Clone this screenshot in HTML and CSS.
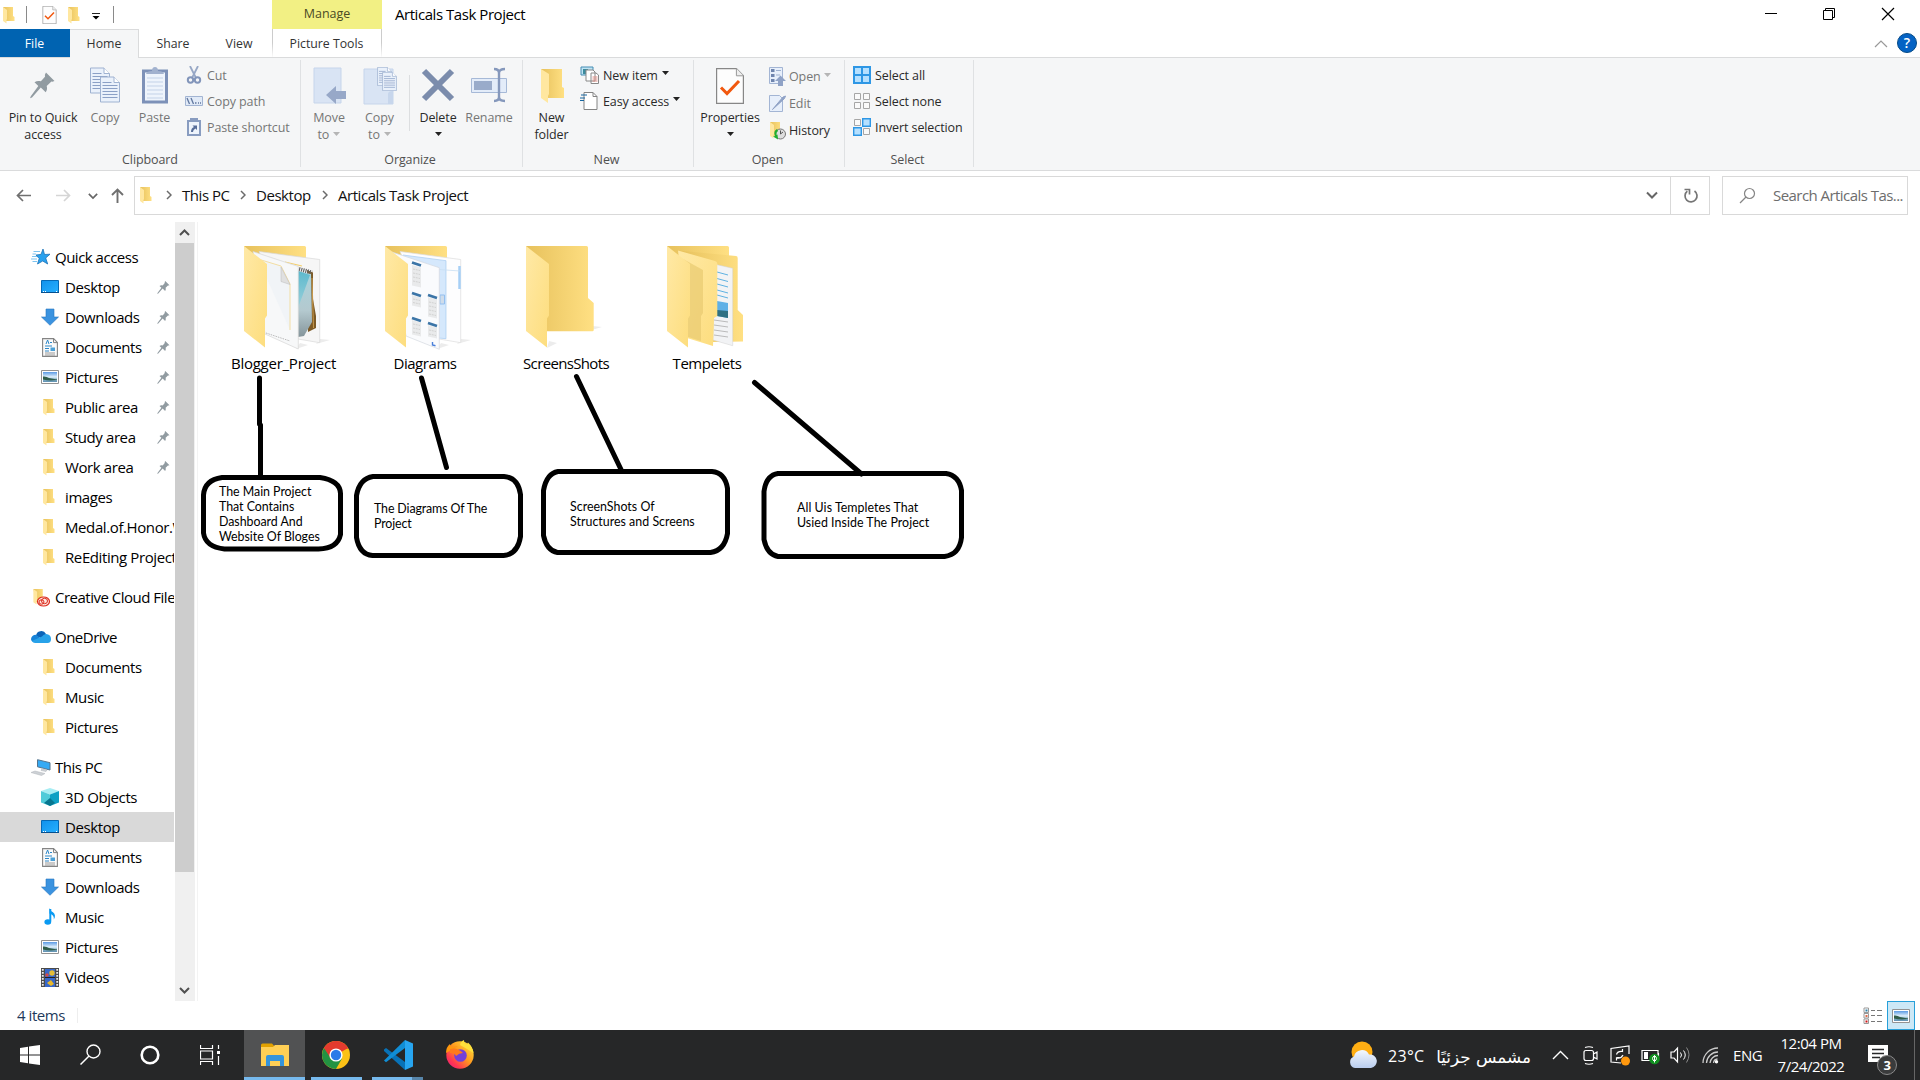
FILE: index.html
```html
<!DOCTYPE html>
<html lang="en">
<head>
<meta charset="utf-8">
<title>Articals Task Project</title>
<link rel="stylesheet" href="styles.css">
</head>
<body>
<svg class="defs" width="0" height="0">
  <defs>
    <linearGradient id="gBack" x1="0" x2="1"><stop offset="0" stop-color="#e7c15c"/><stop offset="1" stop-color="#ffe083"/></linearGradient>
    <linearGradient id="gFront" x1="0" x2="1" y1="0" y2="1"><stop offset="0" stop-color="#ffe9a6"/><stop offset="1" stop-color="#fddd7d"/></linearGradient>
    <linearGradient id="gTeal" x1="0" x2="0" y1="0" y2="1"><stop offset="0" stop-color="#5db9cd"/><stop offset="1" stop-color="#9bd0da"/></linearGradient>
    <linearGradient id="gPad" x1="0" x2="0" y1="0" y2="1"><stop offset="0" stop-color="#a9d4dd"/><stop offset=".6" stop-color="#b4c9cf"/><stop offset="1" stop-color="#85959b"/></linearGradient>
    <linearGradient id="gSky" x1="0" x2="0" y1="0" y2="1"><stop offset="0" stop-color="#5a9ae4"/><stop offset=".5" stop-color="#e2f1fb"/><stop offset=".7" stop-color="#8db7cf"/><stop offset="1" stop-color="#5d8fb0"/></linearGradient>
    <linearGradient id="gScreen" x1="0" x2="1" y1="0" y2="1"><stop offset="0" stop-color="#1091ec"/><stop offset="1" stop-color="#27b0ff"/></linearGradient>
    <linearGradient id="gFox" x1="1" x2="0" y1="0" y2="1"><stop offset="0" stop-color="#fff044"/><stop offset=".45" stop-color="#ff9a1f"/><stop offset=".75" stop-color="#ff3750"/><stop offset="1" stop-color="#e31587"/></linearGradient>
    <linearGradient id="gCloud" x1="0" x2="0" y1="0" y2="1"><stop offset="0" stop-color="#f4f8fe"/><stop offset="1" stop-color="#b9cdee"/></linearGradient>
  </defs>
  <symbol id="folder" viewBox="0 0 14 18"><path d="M1 1h10v9l1.500 1v4H4z" fill="url(#gBack)"/><path d="M1 1l4 3v9l-.5 1v3.500L1 15z" fill="#ffe7a0"/></symbol>
  <symbol id="pin" viewBox="0 0 25 26"><path d="M16 0l8.500 8.500-2.200.7-.9-.3-4.700 4.700c.7 2.600.4 4.300-1 6.200l-4.900-4.900L2 25l-2 .8.800-2.100 7.500-10.100-3.800-3.800c2-1.400 3.900-1.700 6.400-1L15 4.200l-.1-2z" fill="#919ba1"/></symbol>
  <symbol id="check" viewBox="0 0 28 36"><path d="M.6.6h19.800l7 7.200v27.600H.6z" fill="#fdfdfd" stroke="#878787" stroke-width="1.200"/><path d="M20.400.6v7.200h7" fill="#eee" stroke="#999"/><path d="M5 19.500l6 6L23 13" fill="none" stroke="#f1580f" stroke-width="3"/></symbol>
  <symbol id="page" viewBox="0 0 20 26"><path d="M.5.500h13.500l5.500 5.500v19.500H.5z" fill="#eaf1fb" stroke="#9fb2d1"/><path d="M14 .5v5.500h5.500" fill="#fff" stroke="#9fb2d1"/><path d="M2.500 6h9M2.500 9h15M2.500 12h15M2.500 15h15M2.500 18h15M2.500 21h15" stroke="#8ba0c6" fill="none"/></symbol>
  <symbol id="desktop" viewBox="0 0 18 14"><path d="M.5.500h17v12H.5z" fill="url(#gScreen)" stroke="#0669b5"/><path d="M0 12.500h18" stroke="#064f8e"/><path d="M2 11.500h1M4 11.500h1M15 11.500h1" stroke="#fff"/></symbol>
  <symbol id="download" viewBox="0 0 18 18"><path d="M5 1h8v8h4.500L9 17.300.5 9H5z" fill="#3b93e0" stroke="#2676c0" stroke-width=".6"/></symbol>
  <symbol id="document" viewBox="0 0 16 19"><path d="M.6.6h11l3.800 3.800v14H.6z" fill="#fafafa" stroke="#848484" stroke-width="1.100"/><path d="M11.500.6v4h4" fill="none" stroke="#848484"/><path d="M4 6l1.600-4L7 6M8 4.500h2M3 8h7M3 10.500h4M3 13h4" stroke="#2c87c8" fill="none"/><path d="M8.500 9.500h4.500v3.500H8.500z" fill="#4ba0d7"/><path d="M3 15h10M3 17h10" stroke="#999"/></symbol>
  <symbol id="picture" viewBox="0 0 18 14"><path d="M.5.500h17v13H.5z" fill="#fff" stroke="#929292"/><path d="M2 2h14v10H2z" fill="url(#gSky)"/><path d="M2 6.500q3-.5 6 1.500l8 1.500v.5q-8 1-14-.5z" fill="#315e4b"/></symbol>
  <symbol id="star" viewBox="0 0 20 18"><path d="M12 1l1.500 5.500 5.500-.3-4.300 3.800 2 6-5-3L6.500 16l1.700-5.500L5 7l5-.6z" fill="#29a1ee" stroke="#1c72b8" stroke-width=".8"/><path d="M2.500 3.500H9M1.500 6H5M1 8.500h5M0 11h6M1.500 13.500H6" stroke="#7cc3f0"/></symbol>
  <symbol id="ccloud" viewBox="0 0 18 19"><use href="#folder" x="0" y="0" width="14" height="17"/><ellipse cx="11.500" cy="13.500" rx="6" ry="4.500" fill="#ffe8e2" stroke="#db2a1c" stroke-width="1.200"/><ellipse cx="9.500" cy="14" rx="2.500" ry="2.200" fill="none" stroke="#db2a1c"/><ellipse cx="12.500" cy="13" rx="3" ry="2.700" fill="none" stroke="#db2a1c"/></symbol>
  <symbol id="onedrive" viewBox="0 0 20 14"><path d="M5 6a5.300 5.300 0 0 1 10-2L12 9z" fill="#0b63b8"/><path d="M0 9q.5-4 5-4.200L14 12H4q-4 0-4-3z" fill="#1683d8"/><path d="M15 4q5 .6 5 5 0 4-3.500 4H4q-2 0-3.200-2L11 6.500Q12.500 4 15 4z" fill="#28a2e9"/></symbol>
  <symbol id="thispc" viewBox="0 0 20 17"><path d="M6.500.7l12.500 3V11L6.500 7.800z" fill="#35aaf4" stroke="#54738c"/><path d="M11 9.500l5 1.500-1 1.500-5-1zM0 13.500l4-1.500 10 2.500-3.500 2z" fill="#cdd1d5" stroke="#b0b5bb" stroke-width=".5"/></symbol>
  <symbol id="cube" viewBox="0 0 18 18"><path d="M9 0l9 3-9 3.500L0 3z" fill="#a7edf3"/><path d="M0 3l9 3.500V18l-9-3.500z" fill="#50cbd9"/><path d="M18 3L9 6.500V18l9-3.500z" fill="#0fa0c4"/><path d="M9 10l5 5-5 3-6-3z" fill="#07768f"/></symbol>
  <symbol id="music" viewBox="0 0 12 18"><path d="M6.300 1v12.500" stroke="#0a9af2" stroke-width="2"/><ellipse cx="3.800" cy="14" rx="3.400" ry="2.800" fill="#0a9af2"/><path d="M5.500 0q.8 3 3.500 4.200 3.500 3 .8 7.300Q10.500 7 5.500 5.500z" fill="#0a9af2"/></symbol>
  <symbol id="video" viewBox="0 0 18 19"><path d="M0 0h18v19H0z" fill="#4a4a4a"/><path d="M4 1h10v8H4zM4 10h10v9H4z" fill="#3767c8"/><path d="M1.800 1v18M16.200 1v18" stroke="#eee" stroke-width="1.800" stroke-dasharray="1.700 1.300"/><circle cx="11" cy="5" r="2.700" fill="#e4bd36"/><circle cx="6" cy="7" r="1.700" fill="#d94a45"/><path d="M6 15l4-3 3 4-3 2z" fill="#eab829"/><path d="M4 9.500h10" stroke="#222"/></symbol>
  <symbol id="crumb" viewBox="0 0 6 10"><path d="M1 1l4 4-4 4" fill="none" stroke="#6b6b6b" stroke-width="1.500"/></symbol>
  <symbol id="down" viewBox="0 0 12 8"><path d="M1 1.500l5 5 5-5" fill="none" stroke="#666" stroke-width="2"/></symbol>
  <symbol id="caret" viewBox="0 0 7 4"><path d="M0 0h7L3.500 4z" fill="currentColor"/></symbol>
  <symbol id="bigfront" viewBox="0 0 96 108"><path d="M8 2l23 18v51.500l-2 3v29L8 87z" fill="url(#gFront)"/></symbol>
</svg>

<header class="titlebar">
  <div class="quick">
    <svg width="14" height="18"><use href="#folder"/></svg><i></i>
    <svg class="q-check" width="15" height="18"><use href="#check"/></svg>
    <svg class="q-folder" width="14" height="18"><use href="#folder"/></svg>
    <svg class="q-more" width="8" height="7"><path d="M0 .5h8" stroke="#222"/><path d="M.5 3h7L4 6.500z"/></svg><i></i>
  </div>
  <div class="manage">Manage</div>
  <div class="title">Articals Task Project</div>
  <div class="winbtns">
    <svg width="58" height="28"><path d="M23 13.500h12" stroke="#000"/></svg>
    <svg width="58" height="28"><path d="M23.500 10.500h9v9h-9zM25.500 10.500v-2h9v9h-2" fill="none" stroke="#000"/></svg>
    <svg width="60" height="28"><path d="M24 8l12 12M36 8L24 20" fill="none" stroke="#000" stroke-width="1.200"/></svg>
  </div>
</header>

<nav class="tabs">
  <div class="tab file">File</div><div class="tab home">Home</div><div class="tab share">Share</div><div class="tab view">View</div><div class="tab tools">Picture Tools</div>
  <div class="tab-end">
    <svg width="14" height="9"><path d="M1 8l6-6 6 6" fill="none" stroke="#999" stroke-width="1.200"/></svg>
    <span class="help">?</span>
  </div>
</nav>

<section class="ribbon">
  <div class="group clipboard">
    <div class="tools-row">
      <div class="big w86"><svg width="26" height="36"><use href="#pin" y="5" width="25" height="27"/></svg><span>Pin to Quick<br>access</span></div>
      <div class="big w38 dim"><svg width="30" height="36"><use href="#page" width="20" height="27"/><use href="#page" x="10" y="9" width="20" height="27"/></svg><span>Copy</span></div>
      <div class="big w61 dim"><svg width="26" height="37"><path d="M1.500 4h23v31h-23z" fill="#eef4fc" stroke="#7d91b8" stroke-width="3"/><path d="M4 7q1-3 6-3 0-4 3-4t3 4q5 0 6 3z" fill="#a2b2cf"/><path d="M5 11h16M5 15h16M5 19h16M5 23h16M5 27h16M5 31h16" stroke="#c3d2e8"/></svg><span>Paste</span></div>
      <div class="smalls">
        <div class="small dim"><svg width="18" height="18"><path d="M5 0l6 12M13 0L7 12" stroke="#97a7c5" stroke-width="1.800"/><circle cx="5.500" cy="14" r="2.700" fill="none" stroke="#8295ba" stroke-width="2"/><circle cx="12.500" cy="14" r="2.700" fill="none" stroke="#8295ba" stroke-width="2"/></svg>Cut</div>
        <div class="small dim"><svg width="18" height="18"><path d="M.5 4.500h17v9H.5z" fill="#e1eaf7" stroke="#a2b4d2"/><path d="M2 6l2.500 6M6 6l2.500 6M10 11h1.500M13 11h1M15 11h1" stroke="#61779f" fill="none" stroke-width="1.300"/></svg>Copy path</div>
        <div class="small dim"><svg width="18" height="18"><path d="M3 3h12v14H3z" fill="#eef4fc" stroke="#889cc0" stroke-width="2"/><path d="M5 0h8v4H5z" fill="#889cc0"/><path d="M6 14q0-4 3-5L7.500 7.500H12V12l-1.500-1.500Q8 11.500 8 14z" fill="#566d99"/></svg>Paste shortcut</div>
      </div>
    </div>
    <div class="gname">Clipboard</div>
  </div>
  <div class="group organize">
    <div class="tools-row">
      <div class="big w55 dim"><svg width="34" height="37"><path d="M1 1h27v35H1z" fill="#d9e4f4" stroke="#c6d5eb"/><path d="M13 28l10-9v5h10v8H23v5z" fill="#97a8c8"/></svg><span>Move<br>to <svg class="caret" width="7" height="4"><use href="#caret"/></svg></span></div>
      <div class="big w45 dim"><svg width="34" height="38"><path d="M1 2h29v35H1z" fill="#d9e4f4" stroke="#c6d5eb"/><use href="#page" x="14" y="0" width="15" height="19"/><use href="#page" x="19" y="5" width="15" height="19"/><path d="M25 37V27q0-3 5-3v13z" fill="#c7d6ec"/></svg><span>Copy<br>to <svg class="caret" width="7" height="4"><use href="#caret"/></svg></span></div>
      <div class="vline"></div>
      <div class="big w56"><svg width="32" height="36"><path d="M2 4l28 28M30 4L2 32" stroke="#7b8cac" stroke-width="6"/></svg><span>Delete<br><svg class="caret" width="7" height="4"><use href="#caret"/></svg></span></div>
      <div class="big w46 dim"><svg width="36" height="37"><path d="M.5 11.500h35v14H.5z" fill="#e3ecf9" stroke="#a6b9d7"/><path d="M3 14h18v9H3z" fill="#99abca"/><path d="M23 2q5 0 5 4 0-4 6-4M28 4v29M23 34q5 0 5-4 0 4 6 4" fill="none" stroke="#8598bc" stroke-width="2.400"/></svg><span>Rename</span></div>
    </div>
    <div class="gname">Organize</div>
  </div>
  <div class="group new">
    <div class="tools-row">
      <div class="big w57"><svg width="28" height="36"><path d="M3 2h21v18l2 1v10H8z" fill="url(#gBack)"/><path d="M3 2l8 5v20l-1 2v7l-7-5z" fill="#ffe7a0"/></svg><span>New<br>folder</span></div>
      <div class="smalls">
        <div class="small"><svg width="19" height="18"><path d="M1 1h12v8H1z" fill="#c0e4f4" stroke="#448db4"/><path d="M3 3h5v5H3z" fill="#3c8c9e"/><path d="M6 4h7l2 2v9H6zM11 7h5l2.500 2v8.500H11z" fill="#fff" stroke="#888"/><path d="M12.500 11h5M12.500 13h5M12.500 15h5" stroke="#e08b82"/></svg>New item <svg class="caret" width="7" height="4"><use href="#caret"/></svg></div>
        <div class="small"><svg width="19" height="18"><path d="M4 .5h9l4 4v13H4z" fill="#fff" stroke="#848484"/><path d="M13 .5v4h4" stroke="#848484" fill="none"/><path d="M1 3h6M0 6h5M0 8.500h4" stroke="#17669f" stroke-width="1.200" fill="none"/></svg>Easy access <svg class="caret" width="7" height="4"><use href="#caret"/></svg></div>
      </div>
    </div>
    <div class="gname">New</div>
  </div>
  <div class="group open">
    <div class="tools-row">
      <div class="big w72"><svg width="28" height="36"><use href="#check"/></svg><span>Properties<br><svg class="caret" width="7" height="4"><use href="#caret"/></svg></span></div>
      <div class="smalls wide">
        <div class="small dim"><svg width="17" height="19"><path d="M.5.500h13v16H.5z" fill="#e7effb" stroke="#a3b5d4"/><path d="M2 2h3.500v3H2zM2 7h3.500v3H2zM2 12h3.500v3H2z" fill="#6f85ae"/><path d="M7 3.500h5M7 8h4" stroke="#9eb1d0"/><path d="M11.500 8.500L17 14h-3v5H9v-5H6z" fill="#8fa2c6"/></svg>Open <svg class="caret" width="7" height="4"><use href="#caret"/></svg></div>
        <div class="small dim"><svg width="17" height="19"><path d="M.5 1.500h10l3 3v13H.5z" fill="#e7effb" stroke="#a3b5d4"/><path d="M3.500 15.500L14 3l2.500-1-1 2.500z" fill="#8fa2c6" stroke="#8fa2c6"/></svg>Edit</div>
        <div class="small"><svg width="17" height="19"><use href="#folder" width="14" height="18"/><circle cx="11.500" cy="13" r="5" fill="#ddd" stroke="#777"/><path d="M11.500 13V9.500M11.500 13l2.500-2" stroke="#555"/><path d="M8 8q-4 2-2 7l-2 .5 5 3-.5-5-1 .5q-.5-3 1.500-4z" fill="#1fae2f"/></svg>History</div>
      </div>
    </div>
    <div class="gname">Open</div>
  </div>
  <div class="group select">
    <div class="tools-row">
      <div class="smalls">
        <div class="small"><svg width="18" height="18"><path d="M1 1h16v16H1zM9 1v16M1 9h16" fill="#b5e0ff" stroke="#2e97e5" stroke-width="2"/></svg>Select all</div>
        <div class="small"><svg width="18" height="18"><path d="M1.500 1.500h6v6h-6zM10.500 1.500h6v6h-6zM1.500 10.500h6v6h-6zM10.500 10.500h6v6h-6z" fill="#fafafa" stroke="#a6a6a6"/></svg>Select none</div>
        <div class="small"><svg width="18" height="18"><path d="M1.500 1.500h6v6h-6zM10.500 10.500h6v6h-6z" fill="#fafafa" stroke="#a6a6a6"/><path d="M9.700.700h7.600v7.600H9.700zM.7 9.700h7.600v7.600H.7z" fill="#b5e0ff" stroke="#2e97e5" stroke-width="1.400"/></svg>Invert selection</div>
      </div>
    </div>
    <div class="gname">Select</div>
  </div>
</section>

<div class="navbar">
  <div class="arrows">
    <svg width="16" height="13"><path d="M15 6.500H1.500M7 1L1.500 6.500 7 12" fill="none" stroke="#6f6f6f" stroke-width="1.700"/></svg>
    <svg width="16" height="13"><path d="M1 6.500h13.500M9 1l5.500 5.500L9 12" fill="none" stroke="#d5d5d5" stroke-width="1.700"/></svg>
    <svg width="10" height="8"><use href="#down"/></svg>
    <svg width="13" height="15"><path d="M6.500 15V1.500M1 7l5.500-5.500L12 7" fill="none" stroke="#6f6f6f" stroke-width="1.900"/></svg>
  </div>
  <div class="address">
    <svg class="a-folder" width="14" height="18"><use href="#folder"/></svg>
    <svg class="a-c1" width="6" height="10"><use href="#crumb"/></svg><span class="c1">This PC</span>
    <svg width="6" height="10"><use href="#crumb"/></svg><span class="c2">Desktop</span>
    <svg width="6" height="10"><use href="#crumb"/></svg><span>Articals Task Project</span>
    <svg class="drop" width="12" height="8"><use href="#down"/></svg>
  </div>
  <div class="refresh"><svg width="16" height="16"><path d="M11.500 3A6 6 0 1 1 4.300 3.200M1.500 1.500h5v5" fill="none" stroke="#757575" stroke-width="1.700"/></svg></div>
  <div class="search"><svg width="17" height="17"><circle cx="10.500" cy="6.500" r="5" fill="none" stroke="#858585" stroke-width="1.200"/><path d="M7 10l-6 6" stroke="#858585" stroke-width="1.300"/></svg><span>Search Articals Tas...</span></div>
</div>

<main class="body">
  <aside class="tree">
    <div class="row top"><svg width="20" height="18"><use href="#star"/></svg><span>Quick access</span></div>
    <div class="row"><svg width="18" height="14"><use href="#desktop"/></svg><span>Desktop</span><svg class="pin" width="13" height="13"><use href="#pin"/></svg></div>
    <div class="row"><svg width="18" height="18"><use href="#download"/></svg><span>Downloads</span><svg class="pin" width="13" height="13"><use href="#pin"/></svg></div>
    <div class="row"><svg width="18" height="19"><use href="#document"/></svg><span>Documents</span><svg class="pin" width="13" height="13"><use href="#pin"/></svg></div>
    <div class="row"><svg width="18" height="14"><use href="#picture"/></svg><span>Pictures</span><svg class="pin" width="13" height="13"><use href="#pin"/></svg></div>
    <div class="row"><svg width="18" height="18"><use href="#folder" x="1" width="14"/></svg><span>Public area</span><svg class="pin" width="13" height="13"><use href="#pin"/></svg></div>
    <div class="row"><svg width="18" height="18"><use href="#folder" x="1" width="14"/></svg><span>Study area</span><svg class="pin" width="13" height="13"><use href="#pin"/></svg></div>
    <div class="row"><svg width="18" height="18"><use href="#folder" x="1" width="14"/></svg><span>Work area</span><svg class="pin" width="13" height="13"><use href="#pin"/></svg></div>
    <div class="row"><svg width="18" height="18"><use href="#folder" x="1" width="14"/></svg><span>images</span></div>
    <div class="row"><svg width="18" height="18"><use href="#folder" x="1" width="14"/></svg><span>Medal.of.Honor.Warfighter</span></div>
    <div class="row"><svg width="18" height="18"><use href="#folder" x="1" width="14"/></svg><span>ReEditing Project</span></div>
    <div class="row top gap"><svg width="20" height="19"><use href="#ccloud"/></svg><span>Creative Cloud Files</span></div>
    <div class="row top gap"><svg width="20" height="14"><use href="#onedrive"/></svg><span>OneDrive</span></div>
    <div class="row"><svg width="18" height="18"><use href="#folder" x="1" width="14"/></svg><span>Documents</span></div>
    <div class="row"><svg width="18" height="18"><use href="#folder" x="1" width="14"/></svg><span>Music</span></div>
    <div class="row"><svg width="18" height="18"><use href="#folder" x="1" width="14"/></svg><span>Pictures</span></div>
    <div class="row top gap"><svg width="20" height="17"><use href="#thispc"/></svg><span>This PC</span></div>
    <div class="row"><svg width="18" height="18"><use href="#cube"/></svg><span>3D Objects</span></div>
    <div class="row selected"><svg width="18" height="14"><use href="#desktop"/></svg><span>Desktop</span></div>
    <div class="row"><svg width="18" height="19"><use href="#document"/></svg><span>Documents</span></div>
    <div class="row"><svg width="18" height="18"><use href="#download"/></svg><span>Downloads</span></div>
    <div class="row"><svg width="18" height="18"><use href="#music"/></svg><span>Music</span></div>
    <div class="row"><svg width="18" height="14"><use href="#picture"/></svg><span>Pictures</span></div>
    <div class="row"><svg width="18" height="19"><use href="#video"/></svg><span>Videos</span></div>
  </aside>
  <div class="scroll">
    <div class="sbtn"><svg width="11" height="7"><path d="M1 6l4.500-4.500L10 6" fill="none" stroke="#505050" stroke-width="2"/></svg></div>
    <div class="thumb"></div>
    <div class="sbtn end"><svg width="11" height="7"><path d="M1 1l4.500 4.500L10 1" fill="none" stroke="#505050" stroke-width="2"/></svg></div>
  </div>
  <div class="files">
    <div class="tile">
      <svg width="96" height="108" viewBox="0 0 96 108">
        <path d="M80 100l14-4-10-1zM60 105l12-4-8-2z" fill="#ececec"/>
        <path d="M8 2h60.500q1.500 0 1.500 1.500V87H29z" fill="url(#gBack)"/>
        <path d="M23 7.500l60.700 8v83.200L62 95z" fill="#f6f6f6" stroke="#d8d8d8" stroke-width=".7"/>
        <path d="M49 18l17 4" stroke="#f4cf6a" stroke-width="1.200"/>
        <path d="M71 26l6 2.500V55l3 17v12l-8 4z" fill="#7d5a26"/><path d="M76 34l1.500 50" stroke="#c99a4c"/>
        <path d="M62 27l13 3 1 48-8 14-6 1z" fill="url(#gPad)"/>
        <path d="M62 27l12 4-12 33z" fill="url(#gTeal)"/>
        <path d="M63 25l13 3.500" stroke="#666" stroke-width="4" stroke-dasharray="1.200 1"/>
        <path d="M17 7.500l45.300 15v82.500L29 90z" fill="#f7f8f9" stroke="#d5d5d5" stroke-width=".7"/>
        <path d="M22 15l23 7 9 18v46" fill="#f1f4f7" stroke="#f2da99" stroke-width=".9"/><path d="M30 89l24 8" stroke="#aaa" stroke-width=".8" stroke-dasharray="1.500 1"/>
        <path d="M45 23l9 17.500-9-3z" fill="#e0e0e0" stroke="#bbb" stroke-width=".5"/>
        <use href="#bigfront"/>
      </svg><span>Blogger_Project</span></div>
    <div class="tile">
      <svg width="96" height="108" viewBox="0 0 96 108">
        <path d="M80 100l14-4-10-1zM60 105l12-4-8-2z" fill="#ececec"/>
        <path d="M8 2h60.500q1.500 0 1.500 1.500V87H29z" fill="url(#gBack)"/>
        <path d="M23 7.500l60.700 8v83.200L62 95z" fill="#fdfdfe" stroke="#dcdcdc" stroke-width=".7"/><path d="M82.500 22v23" stroke="#a6cff6" stroke-width="2.500"/>
        <path d="M26 11l43 5.700v78L40 92z" fill="#d5e8fc" stroke="#a7cbf0" stroke-width=".7"/><path d="M63 51h4.500v9H63z" fill="#cfdcea" stroke="#93bff0"/><path d="M62 25.500l21 1.500" stroke="#c8def2" stroke-width=".8"/>
        <path d="M15 8l47.300 15.700v81.600L29 92z" fill="#fafbfd" stroke="#d4d9df" stroke-width=".7"/>
        <path d="M35 21l9 2.500v20l-9-2zM35 51l9 2.500v10l-9-2zM35 76l9 2.500v14l-9-2zM51 53l9 2.500v19l-9-2zM51 81l9 2.500v11l-9-2z" fill="#e9eaeb"/>
        <path d="M36 25l7 1.500M36 29l7 1.500M36 33l7 1.500M36 37l7 1.500M36 55l7 1.500M36 58.500l7 1.500M36 80l7 1.500M36 84l7 1.500M36 88l7 1.500M52 58l7 1.500M52 62l7 1.500M52 66l7 1.500M52 70l7 1.500M52 86l7 1.500M52 90l7 1.500" stroke="#cfcfcf" stroke-width=".9" stroke-dasharray="2 .8"/>
        <path d="M35 18.500l9 3M35 49l9 3M35 74l9 3M51 51l9 3M51 79l9 3" stroke="#3c75a7" stroke-width="2.800"/>
        <path d="M55.500 98v3l3 .8" stroke="#497fd9" fill="none" stroke-width="1.400"/>
        <use href="#bigfront"/>
      </svg><span>Diagrams</span></div>
    <div class="tile">
      <svg width="96" height="108" viewBox="0 0 96 108">
        <path d="M70 87l14-4-10-1zM29 104l10-5-8-2z" fill="#ececec"/>
        <path d="M8 2h60.500q1.500 0 1.500 1.500V54l5.700 5v27q0 1.200-1.200 1.200H29z" fill="url(#gBack)"/>
        <use href="#bigfront"/>
      </svg><span>ScreensShots</span></div>
    <div class="tile">
      <svg width="96" height="108" viewBox="0 0 96 108">
        <path d="M8 2h60.500q1.500 0 1.500 1.500V87H29z" fill="url(#gBack)"/>
        <path d="M19 6.500l58 5.500q1.700.2 1.700 2V66l5.300 5v26.500l-30 .5z" fill="url(#gBack)"/>
        <path d="M55 20l18.700 4.300v77.400L54 96z" fill="#f2f3f5" stroke="#d0d0d0" stroke-width=".5"/>
        <path d="M58 28l11 3M58 34.500l11 3M58 40l11 3M58 46l11 3M58 51l11 3" stroke="#5fb2e2"/><path d="M58 57l11 2v15l-11-2z" fill="#5fb0e6"/><path d="M58 66l11 1v7l-11-2z" fill="#2f7083"/><path d="M55 76l14 2M55 81l14 2M55 86l14 2M55 91l14 2" stroke="#bbb"/>
        <path d="M19 6.500l37 10.500q2.300.7 2.300 2.500V72l-3.300 2-1 28L28 94z" fill="url(#gFront)"/><path d="M24 15l20 11v43l-2 3v25l-13-4z" fill="#e8cb70" opacity=".7"/>
        <use href="#bigfront"/>
      </svg><span>Tempelets</span></div>
  </div>
  <svg class="strokes" width="800" height="200" viewBox="200 370 800 200" fill="none" stroke="#000" stroke-width="5" stroke-linecap="round">
    <path d="M259.500 378v46M260.500 425v50M421.500 378l25 89.500M576.500 376.500l44.500 93M754.500 382.500l107 91.500"/>
    <path d="M222 477.500h98q20 3 20.500 16v41q-3 14-22 14.500h-94q-19-2-21-16v-38q1-15 18.500-17.500z"/>
    <path d="M373 476.500h131q14 1 16.500 18v42q-3 18-17 19h-131q-13-1-16-18v-42q3-17 16.500-19z"/>
    <path d="M558 471.500h154q13 1 15.500 17v45q-3 17-17 19h-153q-11-2-14-17v-45q3-17 14.500-19z"/>
    <path d="M778 473.500h168q13 2 15.500 17v47q-2 17-17 19H778q-11-2-14-17v-48q2-16 14-18z"/>
  </svg>
  <p class="note n1">The Main Project<br>That Contains<br>Dashboard And<br>Website Of Bloges</p>
  <p class="note n2">The Diagrams Of The<br>Project</p>
  <p class="note n3">ScreenShots Of<br>Structures and Screens</p>
  <p class="note n4">All Uis Templetes That<br>Usied Inside The Project</p>
</main>

<footer class="status">
  <span>4 items</span><i></i>
  <div class="views">
    <svg width="20" height="18"><path d="M1 1h4.500v4.500H1zM1 6.500h4.500V11H1zM1 12h4.500v4.500H1z" fill="#fff" stroke="#999"/><path d="M2.500 2.500h2v2h-2z" fill="#2e83a8"/><path d="M2.500 8h2v2h-2z" fill="#e06b48"/><path d="M2.500 13.500h2v2h-2z" fill="#c11"/><path d="M8 3.500h4M14 3.500h5M8 8.500h4M14 8.500h5M8 14.500h4M14 14.500h5" stroke="#777"/></svg>
    <div class="thumbview"><svg width="18" height="14"><use href="#picture"/></svg></div>
  </div>
</footer>

<div class="taskbar">
  <div class="tb w60"><svg width="20" height="20"><path d="M0 3l8-1.200v7.700H0zM9 1.600L20 0v9.500H9zM0 10.500h8v7.700L0 17zM9 10.500h11V20L9 18.400z" fill="#fff"/></svg></div>
  <div class="tb w60"><svg width="21" height="21"><circle cx="13.500" cy="7.500" r="6.500" fill="none" stroke="#fff" stroke-width="1.400"/><path d="M9 12l-8.500 8.500" stroke="#fff" stroke-width="1.500"/></svg></div>
  <div class="tb w60"><svg width="20" height="20"><circle cx="10" cy="10" r="8.300" fill="none" stroke="#fff" stroke-width="2.600"/></svg></div>
  <div class="tb w64"><svg width="20" height="20"><path d="M.5 0v3.500h12V0M.5 20v-3.500h12V20M.5 6h12v8H.5zM18.500 0v4M18.500 11v9" fill="none" stroke="#fff" stroke-width="1.200"/><path d="M17 6h3v3h-3z" fill="#fff"/></svg></div>
  <div class="tb active w61"><svg width="28" height="24"><path d="M0 2q0-1.500 1.500-1.500H11L14 4H0z" fill="#e2a100"/><path d="M0 4h12l2-2h14v21H0z" fill="#ffcf55"/><path d="M5 23v-9q0-2 2-2h14q2 0 2 2v9h-4v-5H9v5z" fill="#3594dc"/></svg></div>
  <div class="tb run w61"><svg width="28" height="28"><circle cx="14" cy="14" r="14" fill="#fbc116"/><path d="M14 14L1.900 7A14 14 0 0 1 26.100 7z" fill="#e33b2e"/><path d="M14 14L1.900 7A14 14 0 0 0 14 28l6-10.500z" fill="#229342"/><path d="M14 7.500H26.300A14 14 0 0 0 2 7l6.500 10z" fill="#e33b2e"/><circle cx="14" cy="14" r="6.600" fill="#fff"/><circle cx="14" cy="14" r="5.200" fill="#2a7be8"/></svg></div>
  <div class="tb multi w62"><svg width="30" height="30"><path d="M1 9.500l2-1.600 19 14V30L1 11z" fill="#0872b7"/><path d="M1 20.500L22 0v8L3 22.200z" fill="#108ed6"/><path d="M22 0l8 3.500v23L22 30z" fill="#27a5f0"/></svg></div>
  <div class="tb fox w61"><svg width="28" height="29"><circle cx="14" cy="15" r="13.700" fill="url(#gFox)"/><path d="M14 5Q15 1 18 0q0 3 3 4.500l1-2Q27 7 27.500 13L21 9z" fill="#ffe13c"/><path d="M0 13Q0 7 4 4q0 2 2 3l6-1z" fill="#ff980e"/><circle cx="14.500" cy="15.500" r="6.300" fill="#7440d8"/><path d="M4 9q7-2 13 4-4 0-7 3-1-3-6-3z" fill="#ff7a1c"/></svg></div>
  <div class="tray">
    <svg class="t-weather" width="28" height="28"><circle cx="13" cy="11" r="10.500" fill="#ffae13"/><path d="M6 27a6 6 0 0 1-1-11.500 8 8 0 0 1 15-2A6.800 6.800 0 0 1 22 27z" fill="url(#gCloud)"/></svg>
    <span class="temp">23°C</span><span class="arabic" dir="rtl">مشمس جزئيًا</span>
    <svg class="t-up" width="17" height="10"><path d="M1 9l7.500-7.500L16 9" fill="none" stroke="#fff" stroke-width="1.400"/></svg>
    <svg class="t-cam" width="15" height="19"><path d="M3 4.500h5.500q2 0 2 2v6q0 2-2 2H3q-2 0-2-2v-6q0-2 2-2zM10.500 8l3.500-2v7l-3.500-2M2 1.500q4-1.500 8 0M2 17.500q4 1.500 8 0" fill="none" stroke="#fff" stroke-width="1.200"/></svg>
    <svg class="t-sync" width="21" height="21"><path d="M19 9V1L1 3.500v13.500l10 1" fill="none" stroke="#fff" stroke-width="1.200"/><path d="M6.500 9.500q1-3.500 6-3V4M12.500 6.500H9.500M13 10q-2 4-6.500 3v2.500M6.500 12.500h3" fill="none" stroke="#fff" stroke-width="1.200"/><circle cx="15.500" cy="16" r="4.500" fill="#ff980e"/></svg>
    <svg class="t-bat" width="19" height="19"><path d="M1 4.500h16v10H1zM17.500 7v5" fill="none" stroke="#fff" stroke-width="1.200"/><path d="M3 6h4v7H3z" fill="#fff"/><circle cx="13.500" cy="13" r="5.300" fill="#109020"/><path d="M13.500 9.500q4 3 0 6-4-3 0-6v7" fill="none" stroke="#fff"/></svg>
    <svg class="t-vol" width="20" height="18"><path d="M1 6h3l3.500-4v14L4 12H1z" fill="none" stroke="#fff" stroke-width="1.200"/><path d="M10.500 6.500q2 2.500 0 5M13.500 4.500q3.500 4.500 0 9" fill="none" stroke="#fff"/><path d="M16.500 1.500q5 7 0 15" fill="none" stroke="#888"/></svg>
    <svg class="t-wifi" width="17" height="17"><path d="M1 16A15 15 0 0 1 16 1M4.500 16A11.500 11.500 0 0 1 16 5M8 16a8 8 0 0 1 8-7.500M11.500 16a4.500 4.500 0 0 1 4-4" fill="none" stroke="#ccc" stroke-width="1.300"/><circle cx="14.500" cy="14.800" r="1.700" fill="#fff"/></svg>
    <span class="lang">ENG</span>
    <div class="clock">12:04 PM<br>7/24/2022</div>
    <div class="notif"><svg width="22" height="20"><path d="M0 0h20v17h-5v3l-4-3H0z" fill="#fff"/><path d="M4 4.500h12M4 8.500h12M4 12.500h8" stroke="#262728" stroke-width="1.300"/></svg><b>3</b></div>
    <div class="peek"></div>
  </div>
</div>
</body>
</html>
```
FILE: styles.css
```css
* { box-sizing: border-box; }
body { margin: 0; width: 1920px; height: 1080px; overflow: hidden; display: flex; flex-direction: column; background: #fff; color: #111; font: 15px "Open Sans", "Noto Sans", sans-serif; font-stretch: 90%; letter-spacing: -0.45px; }
svg { display: block; flex: none; }
.defs { position: absolute; }

.titlebar { height: 29px; flex: none; display: flex; }
.quick { width: 272px; display: flex; align-items: center; padding-left: 2px; }
.quick i { width: 1px; height: 17px; background: #8a8a8a; margin-left: 10px; }
.q-check { margin-left: 15px; }
.q-folder { margin-left: 10px; }
.q-more { margin: 4px 3px 0 11px; }
.manage { width: 110px; background: #f2f084; color: #4a4a24; text-align: center; font-size: 12.5px; letter-spacing: 0; line-height: 28px; }
.title { margin-left: 13px; line-height: 29px; color: #000; }
.winbtns { margin-left: auto; padding-right: 2px; display: flex; }

.tabs { height: 28px; flex: none; display: flex; font-size: 12.3px; letter-spacing: 0; color: #333; }
.tab { text-align: center; line-height: 29px; }
.file { width: 70px; background: #0063b1; color: #fff; padding-right: 1px; }
.home { width: 69px; background: #f5f6f7; border: solid #dadbdc; border-width: 1px 1px 0 0; height: 29px; line-height: 27px; z-index: 1; }
.share { width: 68px; }
.view { width: 65px; padding-right: 1px; }
.tools { width: 110px; border: solid; border-width: 0 1px; border-image: linear-gradient(#ccc, #ccc 50%, #fff) 1; padding-right: 1px; }
.tab-end { margin-left: auto; display: flex; align-items: center; padding-right: 3px; gap: 9px; }
.help { width: 20px; height: 20px; border-radius: 50%; background: #0563c4; border: 1px solid #054b87; color: #fff; text-align: center; font-weight: 600; font-size: 14px; line-height: 18px; }

.ribbon { height: 114px; flex: none; background: #f5f6f7; border: solid #dadbdc; border-width: 1px 0; display: flex; font-size: 12.5px; letter-spacing: -0.1px; color: #2a2a2a; padding-top: 2px; }
.group { height: 107px; border-right: 1px solid #dfe1e3; display: flex; flex-direction: column; }
.clipboard { width: 301px; }
.organize { width: 222px; }
.new { width: 171px; }
.open { width: 151px; }
.select { width: 129px; }
.tools-row { height: 89px; flex: none; display: flex; }
.gname { flex: none; text-align: center; line-height: 22px; height: 18px; color: #505050; padding-right: 3px; }
.clipboard .gname { padding-right: 0; }
.big { display: flex; flex-direction: column; align-items: center; padding-top: 7px; white-space: nowrap; text-align: center; line-height: 17px; }
.big > svg { height: 38px; overflow: visible; }
.big > span { margin-top: 4px; }
.caret { display: inline-block; vertical-align: 3px; margin-left: 1px; color: #222; }
.small .caret { margin: -4px 0 0 0; }
.dim .caret { color: #b5b5b5; }
.dim { color: #767676; }
.w86 { width: 86px; } .w38 { width: 38px; } .w61 { width: 61px; }
.big.w61 > svg, .big.w55 > svg { margin-left: 1px; }
.w55 { width: 56px; } .w45 { width: 45px; } .w56 { width: 56px; } .w46 { width: 46px; }
.w57 { width: 57px; } .w72 { width: 72px; }
.vline { width: 1px; height: 56px; margin: 15px 0 0 7px; background: #dcdee0; }
.smalls { padding-top: 2px; white-space: nowrap; }
.small { height: 26px; display: flex; align-items: center; gap: 4px; }
.smalls.wide { padding-top: 3px; }
.wide .small { height: 27px; }
.wide .small { gap: 3px; }
.open .smalls { margin-left: 3px; }
.select .smalls { margin-left: 8px; }

.navbar { height: 51px; flex: none; display: flex; padding-top: 5px; align-items: flex-start; }
.arrows { width: 134px; height: 39px; display: flex; align-items: center; padding-left: 16px; }
.arrows svg:nth-child(2) { margin-left: 23px; }
.arrows svg:nth-child(3) { margin-left: 17px; }
.arrows svg:nth-child(4) { margin-left: 13px; }
.address { width: 1537px; height: 39px; border: 1px solid #d9d9d9; display: flex; align-items: center; padding: 0 0 1px 4px; color: #111; }
.a-c1 { margin-left: 13px; }
.address span { margin-left: 10px; }
.address .c1 { width: 48px; margin-right: 10px; white-space: nowrap; }
.address .c2 { width: 55px; margin-right: 11px; white-space: nowrap; }
.address .drop { margin-left: auto; margin-right: 12px; }
.refresh { width: 39px; height: 39px; border: 1px solid #d9d9d9; border-left: 0; display: flex; align-items: center; justify-content: center; padding-left: 1px; }
.search { width: 186px; height: 39px; margin-left: 12px; border: 1px solid #d9d9d9; display: flex; align-items: center; padding: 0 0 1px 16px; gap: 17px; color: #6d6d6d; white-space: nowrap; letter-spacing: -0.55px; }

.body { height: 779px; flex: none; display: flex; position: relative; }
.tree { width: 174px; padding-top: 20px; overflow: hidden; color: #000; letter-spacing: -0.4px; }
.row { height: 30px; display: flex; align-items: center; padding-left: 41px; white-space: nowrap; }
.row span { margin-left: 6px; }
.row.top { padding-left: 31px; letter-spacing: -0.5px; }
.row.top span { margin-left: 4px; }
.row.gap { margin-top: 10px; }
.row.selected { background: #d9d9d9; }
.row .pin { margin-left: auto; margin-right: 4px; }
.scroll { width: 20px; margin-left: 1px; background: #f0f0f0; display: flex; flex-direction: column; }
.sbtn { height: 21px; display: flex; align-items: center; justify-content: center; padding-right: 1px; }
.thumb { height: 629px; background: #cdcdcd; width: 19px; }
.sbtn.end { margin-top: auto; }
.files { flex: 1; margin-left: 2px; border-left: 1px solid #f3f3f3; padding: 22px 0 0 15px; display: flex; color: #000; }
.tile { width: 141px; display: flex; flex-direction: column; align-items: center; }
.tile span { line-height: 20px; margin-top: 1px; padding-left: 1px; }
.tile:first-child span { letter-spacing: -0.25px; padding-left: 0; }
.tile:nth-child(3) span { letter-spacing: -0.65px; }
.strokes { position: absolute; left: 200px; top: 148px; }
.note { position: absolute; margin: 0; font: 12.4px/15px Lato, sans-serif; letter-spacing: -0.03px; color: #000; white-space: nowrap; }
.n1 { left: 219px; top: 262px; }
.n2 { left: 374px; top: 279px; letter-spacing: -0.12px; }
.n3 { left: 570px; top: 277px; letter-spacing: 0.02px; }
.n4 { left: 797px; top: 278px; letter-spacing: 0.05px; }

.status { height: 29px; flex: none; display: flex; align-items: center; padding-left: 17px; color: #1e395b; }
.status span { padding-bottom: 2px; }
.status i { width: 1px; height: 15px; margin-left: 12px; background: #eee; }
.views { margin-left: auto; display: flex; align-items: center; gap: 4px; padding-right: 5px; }
.thumbview { width: 28px; height: 29px; background: #cce8f6; border: 1px solid #26a0da; display: flex; align-items: center; justify-content: center; }

.taskbar { height: 50px; flex: none; background: #262728; display: flex; color: #fff; }
.tb { display: flex; align-items: center; justify-content: center; padding-bottom: 1px; }
.w60 { width: 60px; } .w64 { width: 64px; } .w62 { width: 62px; }
.tb:nth-child(4) { padding-right: 4px; }
.active { background: linear-gradient(#76b9ed, #76b9ed) bottom / 100% 3px no-repeat #515253; }
.run { background: linear-gradient(#76b9ed, #76b9ed) 6px 100% / 51px 3px no-repeat; }
.multi { background: linear-gradient(90deg, #76b9ed 40px, #5785a9 40px) 6px 100% / 51px 3px no-repeat; padding-left: 2px; }
.fox { padding-left: 3px; }
.tray { margin-left: auto; display: flex; align-items: center; width: 571px; position: relative; }
.temp { width: 37px; margin-left: 11px; font-size: 16px; letter-spacing: 0.3px; padding-top: 2px; }
.arabic { width: 94px; margin-left: 12px; padding-top: 3px; white-space: nowrap; font: 16.8px "DejaVu Sans", sans-serif; letter-spacing: 0; }
.t-up { margin-left: 21px; }
.t-cam { margin-left: 14px; }
.t-sync { margin-left: 12px; }
.t-bat { margin-left: 10px; }
.t-vol { margin-left: 10px; }
.t-wifi { margin-left: 12px; }
.lang { margin-left: 14px; width: 29px; }
.clock { width: 80px; margin-left: 9px; text-align: center; line-height: 23px; white-space: nowrap; }
.notif { margin-left: 17px; position: relative; padding-bottom: 0; }
.notif b { position: absolute; left: 9px; top: 10px; width: 20px; height: 20px; border-radius: 50%; border: 1px solid #8a8a8a; background: #3a3b3c; font-size: 13px; line-height: 18px; text-align: center; }
.peek { position: absolute; right: 5px; top: 0; width: 1px; height: 50px; background: #666; }
```
